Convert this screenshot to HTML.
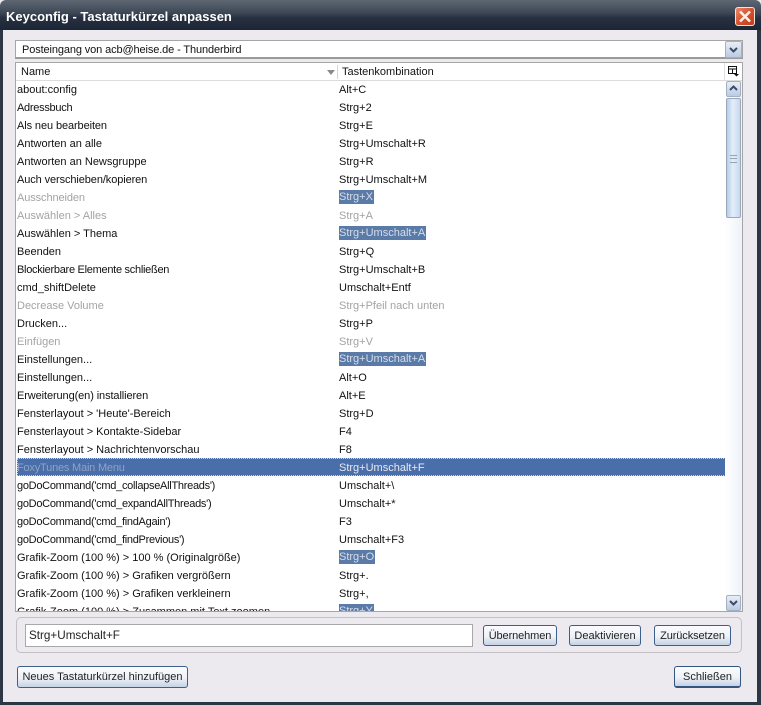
<!DOCTYPE html>
<html><head><meta charset="utf-8"><style>
html,body{margin:0;padding:0}
body{width:761px;height:705px;overflow:hidden;position:relative;background:#ece9ef;font:11px/18px "Liberation Sans",sans-serif;color:#111}
div{position:absolute;box-sizing:border-box;white-space:nowrap}
#tb{left:0;top:0;width:761px;height:30px;background:linear-gradient(#5d6671 0,#4b5562 25%,#3a4452 45%,#263040 60%,#1c2636 100%);border-radius:6px 6px 0 0;color:#fff;font:bold 13px/34px "Liberation Sans",sans-serif;padding-left:6px}
.fr{background:#2c3644}
#x{left:735px;top:7px;width:20px;height:19px;background:linear-gradient(135deg,#e98a6c,#d4512c 50%,#c23c1c);border:1px solid #f0e4dc;border-radius:3px}
#combo{left:15px;top:40px;width:728px;height:19px;background:#fff;border:1px solid #a5a5a5;border-bottom:2px solid #9a9a9a;line-height:19px;padding-left:6px;letter-spacing:-.12px}
.sb{background:linear-gradient(#e8eef7,#b9cbe3);border:1px solid #a4b0c4;border-radius:2px}
#list{left:15px;top:62px;width:728px;height:550px;background:#fff;border:1px solid #a5a5a5;overflow:hidden}
#hd{left:0;top:0;width:726px;height:18px;border-bottom:1px solid #dcdcdc;background:#fff;line-height:18px}
.r{left:1px;width:709px;height:18px;line-height:18px}
.r span{position:absolute;top:1px;white-space:nowrap}
.r span.a{left:0}
.r span.b{left:322px}
.g{color:#a3a3a3}
.r span.m{background:#5a7aa8;color:#d8dee8;line-height:15px;top:2px;height:14px;padding-right:1px}
.sel{background:#4a6ea9;outline:1px dotted #c9d3e2;outline-offset:-1px;color:#e6eaf0}
.sel .a{color:#8da3c6;letter-spacing:-.2px}
.t1 .a{letter-spacing:-.28px}
.t2 .a{letter-spacing:-.1px}
#trk{left:709px;top:18px;width:17px;height:530px;background:linear-gradient(90deg,#fff,#eef3fa)}
#gb{left:16px;top:617px;width:726px;height:36px;border:1px solid #c2c0c4;border-radius:5px}
#inp{left:25px;top:624px;width:448px;height:23px;background:#fff;border:1px solid #a8a8a8;line-height:21px;padding-left:3px;color:#222;font-size:11.7px}
.btn{background:linear-gradient(#fafcff 0,#eef1f6 55%,#c5d3e6 100%);border:1px solid #3e5f8a;border-radius:3px;text-align:center;line-height:20px;color:#222}
</style></head><body>
<div id="tb">Keyconfig - Tastaturkürzel anpassen</div>
<div id="x"><svg width="18" height="17" viewBox="0 0 18 17" style="display:block"><path d="M4 3.5L14 13.5M14 3.5L4 13.5" stroke="#fbeee8" stroke-width="2.6" fill="none"/></svg></div>
<div class="fr" style="left:0;top:30px;width:3px;height:675px"></div>
<div class="fr" style="left:757px;top:30px;width:4px;height:675px"></div>
<div class="fr" style="left:0;top:702px;width:761px;height:3px"></div>

<div id="combo">Posteingang von acb@heise.de - Thunderbird</div>
<div class="sb" style="left:725px;top:41px;width:17px;height:17px"><svg width="15" height="15" style="display:block"><path d="M4 6L7.5 9.5L11 6" stroke="#3c4a66" stroke-width="2" fill="none"/></svg></div>

<div id="list">
<div id="hd">
<div style="left:5px;top:0">Name</div>
<svg style="position:absolute;left:310px;top:6px" width="10" height="7"><path d="M1 1H9L5 6Z" fill="#8a8a8a"/></svg>
<div style="left:321px;top:2px;width:1px;height:14px;background:#d5d5d5"></div>
<div style="left:326px;top:0">Tastenkombination</div>
<div style="left:708px;top:0;width:1px;height:17px;background:#e0e0e0"></div>
<svg style="position:absolute;left:712px;top:3px" width="11" height="11"><path d="M0.5 0.5H8.5V7.5H0.5ZM0.5 3H8.5M4.5 3V7.5" stroke="#111" fill="none"/><path d="M6 8H11L8.5 10.5Z" fill="#111"/></svg>
</div>

<div class="r" style="top:17px"><span class="a">about:config</span><span class="b">Alt+C</span></div>
<div class="r t1" style="top:35px"><span class="a">Adressbuch</span><span class="b">Strg+2</span></div>
<div class="r t2" style="top:53px"><span class="a">Als neu bearbeiten</span><span class="b">Strg+E</span></div>
<div class="r" style="top:71px"><span class="a">Antworten an alle</span><span class="b">Strg+Umschalt+R</span></div>
<div class="r" style="top:89px"><span class="a">Antworten an Newsgruppe</span><span class="b">Strg+R</span></div>
<div class="r t2" style="top:107px"><span class="a">Auch verschieben/kopieren</span><span class="b">Strg+Umschalt+M</span></div>
<div class="r g t2" style="top:125px"><span class="a">Ausschneiden</span><span class="b m">Strg+X</span></div>
<div class="r g" style="top:143px"><span class="a">Auswählen &gt; Alles</span><span class="b">Strg+A</span></div>
<div class="r" style="top:161px"><span class="a">Auswählen &gt; Thema</span><span class="b m">Strg+Umschalt+A</span></div>
<div class="r" style="top:179px"><span class="a">Beenden</span><span class="b">Strg+Q</span></div>
<div class="r t1" style="top:197px"><span class="a">Blockierbare Elemente schließen</span><span class="b">Strg+Umschalt+B</span></div>
<div class="r" style="top:215px"><span class="a">cmd_shiftDelete</span><span class="b">Umschalt+Entf</span></div>
<div class="r g" style="top:233px"><span class="a">Decrease Volume</span><span class="b">Strg+Pfeil nach unten</span></div>
<div class="r" style="top:251px"><span class="a">Drucken...</span><span class="b">Strg+P</span></div>
<div class="r g" style="top:269px"><span class="a">Einfügen</span><span class="b">Strg+V</span></div>
<div class="r" style="top:287px"><span class="a">Einstellungen...</span><span class="b m">Strg+Umschalt+A</span></div>
<div class="r" style="top:305px"><span class="a">Einstellungen...</span><span class="b">Alt+O</span></div>
<div class="r t2" style="top:323px"><span class="a">Erweiterung(en) installieren</span><span class="b">Alt+E</span></div>
<div class="r" style="top:341px"><span class="a">Fensterlayout &gt; 'Heute'-Bereich</span><span class="b">Strg+D</span></div>
<div class="r" style="top:359px"><span class="a">Fensterlayout &gt; Kontakte-Sidebar</span><span class="b">F4</span></div>
<div class="r" style="top:377px"><span class="a">Fensterlayout &gt; Nachrichtenvorschau</span><span class="b">F8</span></div>
<div class="r sel" style="top:395px"><span class="a">FoxyTunes Main Menu</span><span class="b">Strg+Umschalt+F</span></div>
<div class="r t1" style="top:413px"><span class="a">goDoCommand('cmd_collapseAllThreads')</span><span class="b">Umschalt+\</span></div>
<div class="r t1" style="top:431px"><span class="a">goDoCommand('cmd_expandAllThreads')</span><span class="b">Umschalt+*</span></div>
<div class="r t1" style="top:449px"><span class="a">goDoCommand('cmd_findAgain')</span><span class="b">F3</span></div>
<div class="r t1" style="top:467px"><span class="a">goDoCommand('cmd_findPrevious')</span><span class="b">Umschalt+F3</span></div>
<div class="r" style="top:485px"><span class="a">Grafik-Zoom (100 %) &gt; 100 % (Originalgröße)</span><span class="b m">Strg+O</span></div>
<div class="r" style="top:503px"><span class="a">Grafik-Zoom (100 %) &gt; Grafiken vergrößern</span><span class="b">Strg+.</span></div>
<div class="r" style="top:521px"><span class="a">Grafik-Zoom (100 %) &gt; Grafiken verkleinern</span><span class="b">Strg+,</span></div>
<div class="r" style="top:539px"><span class="a">Grafik-Zoom (100 %) &gt; Zusammen mit Text zoomen</span><span class="b m">Strg+Y</span></div>

<div id="trk"></div>
<div class="sb" style="left:710px;top:18px;width:15px;height:16px"><svg width="13" height="14" style="display:block"><path d="M3 8L6.5 4.5L10 8" stroke="#3c4a66" stroke-width="2" fill="none"/></svg></div>
<div style="left:710px;top:35px;width:15px;height:120px;background:linear-gradient(90deg,#b7cdea,#e4eef9 45%,#c6d8ef);border:1px solid #9aa8bc;border-radius:2px"><div style="left:3px;top:56px;width:7px;height:8px;border-top:1px solid #98a4b4;border-bottom:1px solid #98a4b4"></div><div style="left:3px;top:59px;width:7px;height:2px;border-top:1px solid #98a4b4"></div></div>
<div class="sb" style="left:710px;top:532px;width:15px;height:16px"><svg width="13" height="14" style="display:block"><path d="M3 5L6.5 8.5L10 5" stroke="#3c4a66" stroke-width="2" fill="none"/></svg></div>
</div>

<div id="gb"></div>
<div id="inp">Strg+Umschalt+F</div>
<div class="btn" style="left:483px;top:625px;width:74px;height:21px;letter-spacing:-.1px">Übernehmen</div>
<div class="btn" style="left:569px;top:625px;width:72px;height:21px">Deaktivieren</div>
<div class="btn" style="left:654px;top:625px;width:77px;height:21px;letter-spacing:-.1px">Zurücksetzen</div>
<div class="btn" style="left:17px;top:666px;width:171px;height:22px;line-height:21px">Neues Tastaturkürzel hinzufügen</div>
<div class="btn" style="left:674px;top:666px;width:67px;height:22px;border-color:#33557f;border-bottom-width:2px;line-height:20px">Schließen</div>
</body></html>
